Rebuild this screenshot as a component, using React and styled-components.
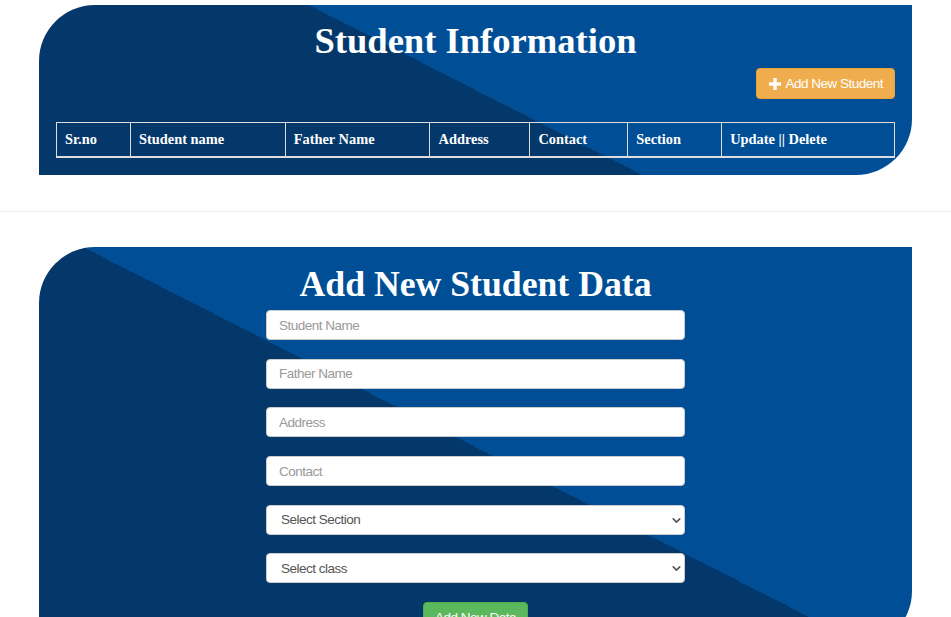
import React from 'react'
import styled, { createGlobalStyle } from 'styled-components'
import { ChevronDown } from 'lucide-react'

const GlobalStyle = createGlobalStyle`
html, body {
  margin: 0;
  padding: 0;
  background: #fff;
  overflow: hidden;
}
* { box-sizing: border-box; }
`

const Page = styled.div`
width: 951px;
height: 617px;
overflow: hidden;
padding-top: 5px;
font-family: "Liberation Sans", Arial, sans-serif;
`

const Card = styled.section`
margin: 0 39px;
border-radius: 56px 0 56px 0;
background: linear-gradient(27deg, #04386a 50%, #004f96 50%);
padding: ${p => p.$pad};
display: flex;
flex-direction: column;
`

const Title = styled.h1`
margin: 0;
text-align: center;
color: #fff;
font-family: "Liberation Serif", "Times New Roman", serif;
font-weight: 700;
font-size: ${p => p.$size}px;
line-height: 40px;
`

const ToolRow = styled.div`
display: flex;
justify-content: flex-end;
margin-top: 7px;
`

const WarnButton = styled.button`
display: flex;
align-items: center;
gap: 4px;
height: 31px;
padding: 0 11px 0 12px;
background: #f0ad4e;
border: 1px solid #eea236;
border-radius: 4px;
color: #fff;
font-family: "Liberation Sans", Arial, sans-serif;
font-size: 13.5px;
letter-spacing: -0.5px;
`

const Table = styled.table`
width: 100%;
margin-top: 23px;
border-collapse: collapse;
color: #fff;
font-family: "Liberation Serif", "Times New Roman", serif;
font-size: 14.4px;
`

const Th = styled.th`
text-align: left;
font-weight: 700;
padding: 7px 8px 8px;
line-height: 18px;
border: 1px solid #ddd;
border-bottom: 2px solid #ddd;
width: ${p => p.$w}px;
`

const Divider = styled.hr`
margin: 36px 0 35px;
border: 0;
border-top: 1px solid #eee;
`

const Form = styled.form`
width: 419px;
margin: 6px auto 0;
display: flex;
flex-direction: column;
align-items: stretch;
`

const Group = styled.div`
position: relative;
margin-bottom: 18.7px;
`

const Input = styled.input`
display: block;
width: 100%;
height: 30px;
padding: 0 12px;
border: 1px solid #ccc;
border-radius: 4px;
background: #fff;
font-family: "Liberation Sans", Arial, sans-serif;
font-size: 13.5px;
letter-spacing: -0.5px;
color: #555;
&::placeholder { color: #999; }
`

const Select = styled.select`
display: block;
width: 100%;
height: 30px;
padding: 0 30px 0 14px;
border: 1px solid #ccc;
border-radius: 4px;
background: #fff;
appearance: none;
font-family: "Liberation Sans", Arial, sans-serif;
font-size: 13.5px;
letter-spacing: -0.5px;
color: #555;
`

const Caret = styled.span`
position: absolute;
right: 2px;
top: 9px;
display: flex;
color: #555;
pointer-events: none;
`

const SubmitRow = styled.div`
display: flex;
justify-content: center;
`

const SuccessButton = styled.button`
height: 30px;
padding: 0 11px;
background: #5cb85c;
border: 1px solid #4cae4c;
border-radius: 4px;
color: #fff;
font-family: "Liberation Sans", Arial, sans-serif;
font-size: 13.5px;
letter-spacing: -0.5px;
`

const PlusIcon = () => (
  <svg width="12" height="12" viewBox="0 0 12 12">
    <rect x="4.3" y="0" width="3.4" height="12" fill="#fff" />
    <rect x="0" y="4.3" width="12" height="3.4" fill="#fff" />
  </svg>
)

const columns = [
  ['Sr.no', 74],
  ['Student name', 155],
  ['Father Name', 145],
  ['Address', 100],
  ['Contact', 98],
  ['Section', 94],
  ['Update || Delete', 173]
]

const fields = ['Student Name', 'Father Name', 'Address', 'Contact']
const selects = ['Select Section', 'Select class']

export default function App() {
  return (
    <Page>
      <GlobalStyle />
      <Card $pad="16px 17px 17px">
        <Title $size={36.6}>Student Information</Title>
        <ToolRow>
          <WarnButton><PlusIcon />Add New Student</WarnButton>
        </ToolRow>
        <Table>
          <thead>
            <tr>
              {columns.map(([name, w]) => <Th key={name} $w={w}>{name}</Th>)}
            </tr>
          </thead>
        </Table>
      </Card>

      <Divider />

      <Card $pad="17px 0 15px">
        <Title $size={35.7}>Add New Student Data</Title>
        <Form onSubmit={e => e.preventDefault()}>
          {fields.map(f => (
            <Group key={f}><Input placeholder={f} /></Group>
          ))}
          {selects.map(s => (
            <Group key={s}>
              <Select defaultValue="">
                <option value="">{s}</option>
              </Select>
              <Caret><ChevronDown size={13} strokeWidth={3} /></Caret>
            </Group>
          ))}
          <SubmitRow>
            <SuccessButton>Add New Data</SuccessButton>
          </SubmitRow>
        </Form>
      </Card>
    </Page>
  )
}
